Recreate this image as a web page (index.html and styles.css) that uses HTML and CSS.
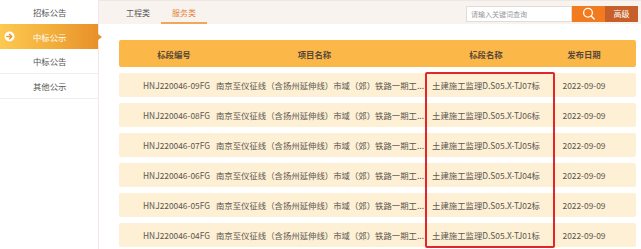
FILE: index.html
```html
<!DOCTYPE html>
<html>
<head>
  <title>中标公示 - 服务类</title>
  <meta name="viewport" content="width=device-width, initial-scale=1">
  <link rel="stylesheet" href="styles.css">
</head>
<body>
  <div class="page">
    <!-- Left menu -->
    <ul class="side-menu">
      <li class="side-item">招标公告</li>
      <li class="side-item active">
        <svg class="side-icon" width="11" height="11" viewBox="0 0 11 11">
          <circle cx="5.5" cy="5.5" r="5" fill="#ffffff"/>
          <path d="M2.8 5.5h5M5.6 3.3l2.2 2.2-2.2 2.2" stroke="#ec9a2e" stroke-width="1.4" fill="none" stroke-linecap="round" stroke-linejoin="round"/>
        </svg>
        中标公示
      </li>
      <li class="side-item line">中标公告</li>
      <li class="side-item line">其他公示</li>
    </ul>

    <div class="main">
      <div class="top-bar">
        <div class="tabs">
          <span class="tab">工程类</span>
          <span class="tab current">服务类</span>
        </div>
        <form class="search">
          <input type="text" placeholder="请输入关键词查询">
          <button type="button" class="search-btn">
            <svg width="14" height="14" viewBox="0 0 14 14">
              <circle cx="6" cy="5.8" r="4.4" stroke="#ffffff" stroke-width="1.3" fill="none"/>
              <path d="M9.2 9l3 3" stroke="#ffffff" stroke-width="1.4" stroke-linecap="round"/>
            </svg>
          </button>
          <button type="button" class="adv-btn">高级</button>
        </form>
      </div>

      <div class="list">
        <div class="list-head">
          <span class="c1">标段编号</span>
          <span class="c2">项目名称</span>
          <span class="c3">标段名称</span>
          <span class="c4">发布日期</span>
        </div>

        <div class="row">
          <span class="c1">HNJ220046-09FG</span>
          <span class="c2">南京至仪征线（含扬州延伸线）市域（郊）铁路一期工...</span>
          <span class="c3">土建施工监理D.S05.X-TJ07标</span>
          <span class="c4">2022-09-09</span>
        </div>
        <div class="row">
          <span class="c1">HNJ220046-08FG</span>
          <span class="c2">南京至仪征线（含扬州延伸线）市域（郊）铁路一期工...</span>
          <span class="c3">土建施工监理D.S05.X-TJ06标</span>
          <span class="c4">2022-09-09</span>
        </div>
        <div class="row">
          <span class="c1">HNJ220046-07FG</span>
          <span class="c2">南京至仪征线（含扬州延伸线）市域（郊）铁路一期工...</span>
          <span class="c3">土建施工监理D.S05.X-TJ05标</span>
          <span class="c4">2022-09-09</span>
        </div>
        <div class="row">
          <span class="c1">HNJ220046-06FG</span>
          <span class="c2">南京至仪征线（含扬州延伸线）市域（郊）铁路一期工...</span>
          <span class="c3">土建施工监理D.S05.X-TJ04标</span>
          <span class="c4">2022-09-09</span>
        </div>
        <div class="row">
          <span class="c1">HNJ220046-05FG</span>
          <span class="c2">南京至仪征线（含扬州延伸线）市域（郊）铁路一期工...</span>
          <span class="c3">土建施工监理D.S05.X-TJ02标</span>
          <span class="c4">2022-09-09</span>
        </div>
        <div class="row">
          <span class="c1">HNJ220046-04FG</span>
          <span class="c2">南京至仪征线（含扬州延伸线）市域（郊）铁路一期工...</span>
          <span class="c3">土建施工监理D.S05.X-TJ01标</span>
          <span class="c4">2022-09-09</span>
        </div>

        <!-- red highlight drawn over the 标段名称 column -->
        <div class="mark"></div>
      </div>
    </div>
  </div>
</body>
</html>
```

FILE: styles.css
```css
/* Common styles */
body {
  margin: 0;
  padding: 0;
  background-color: #ffffff;
  color: #555555;
  font-family: "Noto Sans CJK SC", "Noto Sans", sans-serif;
  font-size: 8.4px;
}

.page {
  display: flex;
  height: 249px;
  overflow: hidden;
}

/* Side menu */
.side-menu {
  list-style: none;
  margin: 0;
  padding: 0;
  width: 98px;
  flex-shrink: 0;
  border-right: 1px solid #f3e7e7;
}

.side-item {
  position: relative;
  display: flex;
  align-items: center;
  height: 24px;
  padding-left: 33px;
  color: #555555;
}

.side-item.line {
  height: 24px;
  border-bottom: 1px solid #eeeeee;
}

.side-item.active {
  height: 25px;
  color: #ffffff;
  background: linear-gradient(to right, #fdc950, #f2ad3a 55%, #e8902a);
}

.side-item.active::after {
  content: "";
  position: absolute;
  right: -4px;
  top: 10px;
  border-left: 4px solid #e8902a;
  border-top: 3px solid transparent;
  border-bottom: 3px solid transparent;
}

.side-icon {
  position: absolute;
  left: 4px;
  top: 7px;
}

/* Main area */
.main {
  flex: 1;
  min-width: 0;
}

.top-bar {
  display: flex;
  justify-content: space-between;
  align-items: center;
  height: 24px;
  background-color: #f9f3ef;
  border-top: 1px solid #efe7e2;
  box-sizing: border-box;
  padding-left: 16px;
  padding-right: 3px;
}

.tabs {
  display: flex;
  height: 100%;
}

.tab {
  display: flex;
  align-items: center;
  padding: 0 11px;
  font-size: 8px;
  color: #555555;
  box-sizing: border-box;
  border-bottom: 2px solid transparent;
  padding-top: 2px;
}

.tab.current {
  color: #e3843a;
  border-bottom-color: #f2a65a;
}

.search {
  display: flex;
  height: 16px;
  margin-top: 2px;
}

.search input {
  width: 106px;
  height: 16px;
  box-sizing: border-box;
  margin: 0;
  padding: 0 4px;
  border: 1px solid #e2dcd8;
  font-family: inherit;
  font-size: 7px;
  outline: none;
}

.search input::placeholder {
  color: #999999;
}

.search button {
  height: 16px;
  width: 33px;
  margin: 0;
  padding: 0;
  border: none;
  display: flex;
  align-items: center;
  justify-content: center;
  font-family: inherit;
  font-size: 8px;
  color: #ffffff;
  cursor: pointer;
}

.search-btn {
  background-color: #f37b1f;
}

.adv-btn {
  background-color: #c75f2a;
}

/* List */
.list {
  position: relative;
  margin: 16px 5px 0 20px;
}

.list-head,
.row {
  display: grid;
  grid-template-columns: 97px 204px 132px 64px 1fr;
  align-items: center;
  border-radius: 2px;
}

.list-head {
  height: 27px;
  background-color: #fbb848;
  color: #56473a;
  font-weight: bold;
  margin-bottom: 6px;
}

.list-head span {
  text-align: center;
}

.list-head .c1 {
  padding-left: 13px;
}

.list-head .c2 {
  padding-right: 7px;
}

.row {
  height: 24px;
  margin-bottom: 6px;
  background-color: #fdf0d4;
  color: #5c5752;
}

.row .c1 {
  padding-left: 24px;
}

.row span {
  white-space: nowrap;
}

.row .c3,
.row .c4 {
  text-align: center;
}

.mark {
  position: absolute;
  left: 306px;
  top: 32px;
  width: 130px;
  height: 176px;
  box-sizing: border-box;
  border: 2px solid #e3262a;
  border-radius: 2px;
}
```
